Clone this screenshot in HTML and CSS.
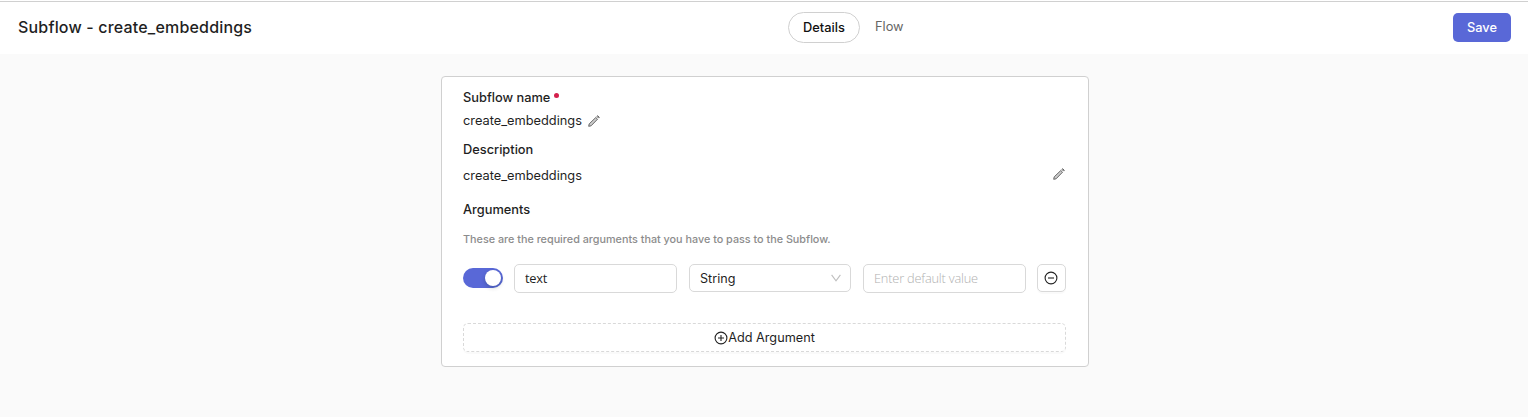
FILE: index.html
```html
<!DOCTYPE html>
<html lang="en">
<head>
<meta charset="utf-8">
<title>Subflow - create_embeddings</title>
<link rel="stylesheet" href="styles.css">
</head>
<body>
<header class="topbar">
  <h1 class="title">Subflow - create_embeddings</h1>
  <nav class="tabs">
    <a class="tab tab-active">Details</a>
    <a class="tab">Flow</a>
  </nav>
  <div class="actions"><button class="save">Save</button></div>
</header>
<main class="page">
  <section class="card">
    <h2 class="label name-label"><span class="label-text">Subflow name</span><span class="required"></span></h2>
    <div class="value name-value">
      <span class="value-text">create_embeddings</span>
      <svg class="pencil" viewBox="0 0 12 12"><path d="M.7 11.3l.5-2.4 6.6-6.4 1.7 1.7-6.4 6.6zM8.9 1.4l.8-.7 1.6 1.6-.7.8z"/></svg>
    </div>
    <h2 class="label desc-label"><span class="label-text">Description</span></h2>
    <div class="value desc-value">
      <span class="value-text">create_embeddings</span>
      <svg class="pencil" viewBox="0 0 12 12"><path d="M.7 11.3l.5-2.4 6.6-6.4 1.7 1.7-6.4 6.6zM8.9 1.4l.8-.7 1.6 1.6-.7.8z"/></svg>
    </div>
    <h2 class="label args-label"><span class="label-text">Arguments</span></h2>
    <p class="hint"><span>These are the required arguments that you have to pass to the Subflow.</span></p>
    <div class="argument">
      <span class="switch"><span class="knob"></span></span>
      <input class="field" type="text" value="text">
      <div class="select"><span class="select-text">String</span>
        <svg class="chevron" viewBox="0 0 10 8"><path d="M.6.8L5 6.8 9.4.8"/></svg>
      </div>
      <input class="field" type="text" placeholder="Enter default value">
      <button class="remove"><svg class="circle-icon" viewBox="0 0 14 14"><circle cx="7" cy="7" r="5.9"/><path d="M4 7h6"/></svg></button>
    </div>
    <button class="add"><svg class="circle-icon" viewBox="0 0 14 14"><circle cx="7" cy="7" r="5.9"/><path d="M4 7h6M7 4v6"/></svg><span class="add-text">Add Argument</span></button>
  </section>
</main>
</body>
</html>
```
FILE: styles.css
```css
* { box-sizing: border-box; }
body {
  margin: 0;
  padding-top: 1px;
  height: 417px;
  overflow: hidden;
  background: #fff;
  color: #1f1f1f;
  font: 12.8px/20px Inter, sans-serif;
}
h1, h2, p { margin: 0; }
button, input { font: inherit; color: inherit; }

.topbar {
  display: grid;
  grid-template-columns: 788px auto 1fr;
  height: 53px;
  border-top: 1px solid #d0d0d0;
  background: #fff;
}
.title {
  padding: 15px 0 0 18px;
  font-size: 16px;
  line-height: 20px;
  font-weight: 500;
  letter-spacing: 0.18px;
}
.tabs { display: flex; padding-top: 10px; }
.tab { padding: 5px 15px; color: #666; height: 31px; line-height: 20px; font-weight: 400; }
.tab-active {
  width: 72px;
  padding: 5px 0;
  text-align: center;
  border: 1px solid #d0d0d0;
  border-radius: 16px;
  color: #111;
  font-weight: 500;
}
.actions { display: flex; justify-content: flex-end; padding: 11px 17px 0 0; }
.save {
  width: 58px;
  height: 29px;
  padding: 0;
  border: 0;
  border-radius: 5px;
  background: #5968d7;
  color: #fff;
  font-weight: 500;
}

.page { height: 363px; padding: 22px 0 0 441px; background: #fafafa; }
.card {
  width: 648px;
  height: 291px;
  padding: 11px 22px 0 21px;
  border: 1px solid #d0d0d0;
  border-radius: 4px;
  background: #fff;
}
.label { display: flex; line-height: 20px; font-size: inherit; font-weight: 500; }
.required { width: 5px; height: 5px; margin: 5px 0 0 4px; border-radius: 50%; background: #d4204c; }
.value { display: flex; align-items: center; height: 20px; }
.name-value { gap: 6px; margin-top: 3px; }
.desc-label { margin-top: 9px; }
.desc-value { justify-content: space-between; margin-top: 6px; padding-right: 1px; }
.args-label { margin-top: 14px; }
.pencil { width: 12px; height: 12px; fill: #ccc; stroke: #666; stroke-width: 1; }
.desc-value .pencil { margin-top: -4px; }
.hint { margin-top: 10px; color: #8c8c8c; font-size: 10.8px; line-height: 20px; font-weight: 500; }

.argument {
  display: grid;
  grid-template-columns: 51px 175px 174px 174px 29px;
  height: 29px;
  margin-top: 14px;
}
.switch {
  display: flex;
  justify-content: flex-end;
  width: 40px;
  height: 20px;
  margin-top: 4px;
  padding: 2px;
  border-radius: 10px;
  background: #5968d7;
}
.knob { width: 16px; height: 16px; border-radius: 50%; background: #fff; box-shadow: 0 2px 4px rgba(0, 35, 11, .2); }
.field {
  width: 163px;
  height: 29px;
  padding: 0 10px 2px;
  border: 1px solid #d9d9d9;
  border-radius: 5px;
  background: #fff;
  font-family: "Open Sans", sans-serif;
  font-weight: 400;
  letter-spacing: -0.2px;
}
.field::placeholder { color: #b0b0b0; opacity: 1; font-weight: 300; }
.select {
  display: flex;
  align-items: center;
  justify-content: space-between;
  width: 162px;
  height: 28px;
  padding: 0 9px 0 10px;
  border: 1px solid #d9d9d9;
  border-radius: 5px;
}
.select-text { padding-top: 1px; font-size: 12.6px; }
.chevron { width: 10px; height: 8px; fill: none; stroke: #bfbfbf; stroke-width: 1.1; }
.remove {
  display: flex;
  align-items: center;
  justify-content: center;
  height: 28px;
  padding: 0 1px 0 0;
  border: 1px solid #d9d9d9;
  border-radius: 5px;
  background: #fff;
  box-shadow: 0 2px 0 rgba(0, 0, 0, .02);
}
.circle-icon { width: 14px; height: 14px; fill: none; stroke: #222; stroke-width: 1.1; }
.add {
  display: flex;
  align-items: center;
  justify-content: center;
  width: 100%;
  height: 29px;
  margin-top: 30px;
  padding: 0;
  border: 1px dashed #d9d9d9;
  border-radius: 5px;
  background: #fff;
  box-shadow: 0 2px 0 rgba(0, 0, 0, .02);
  font-size: 12.7px;
}
```
